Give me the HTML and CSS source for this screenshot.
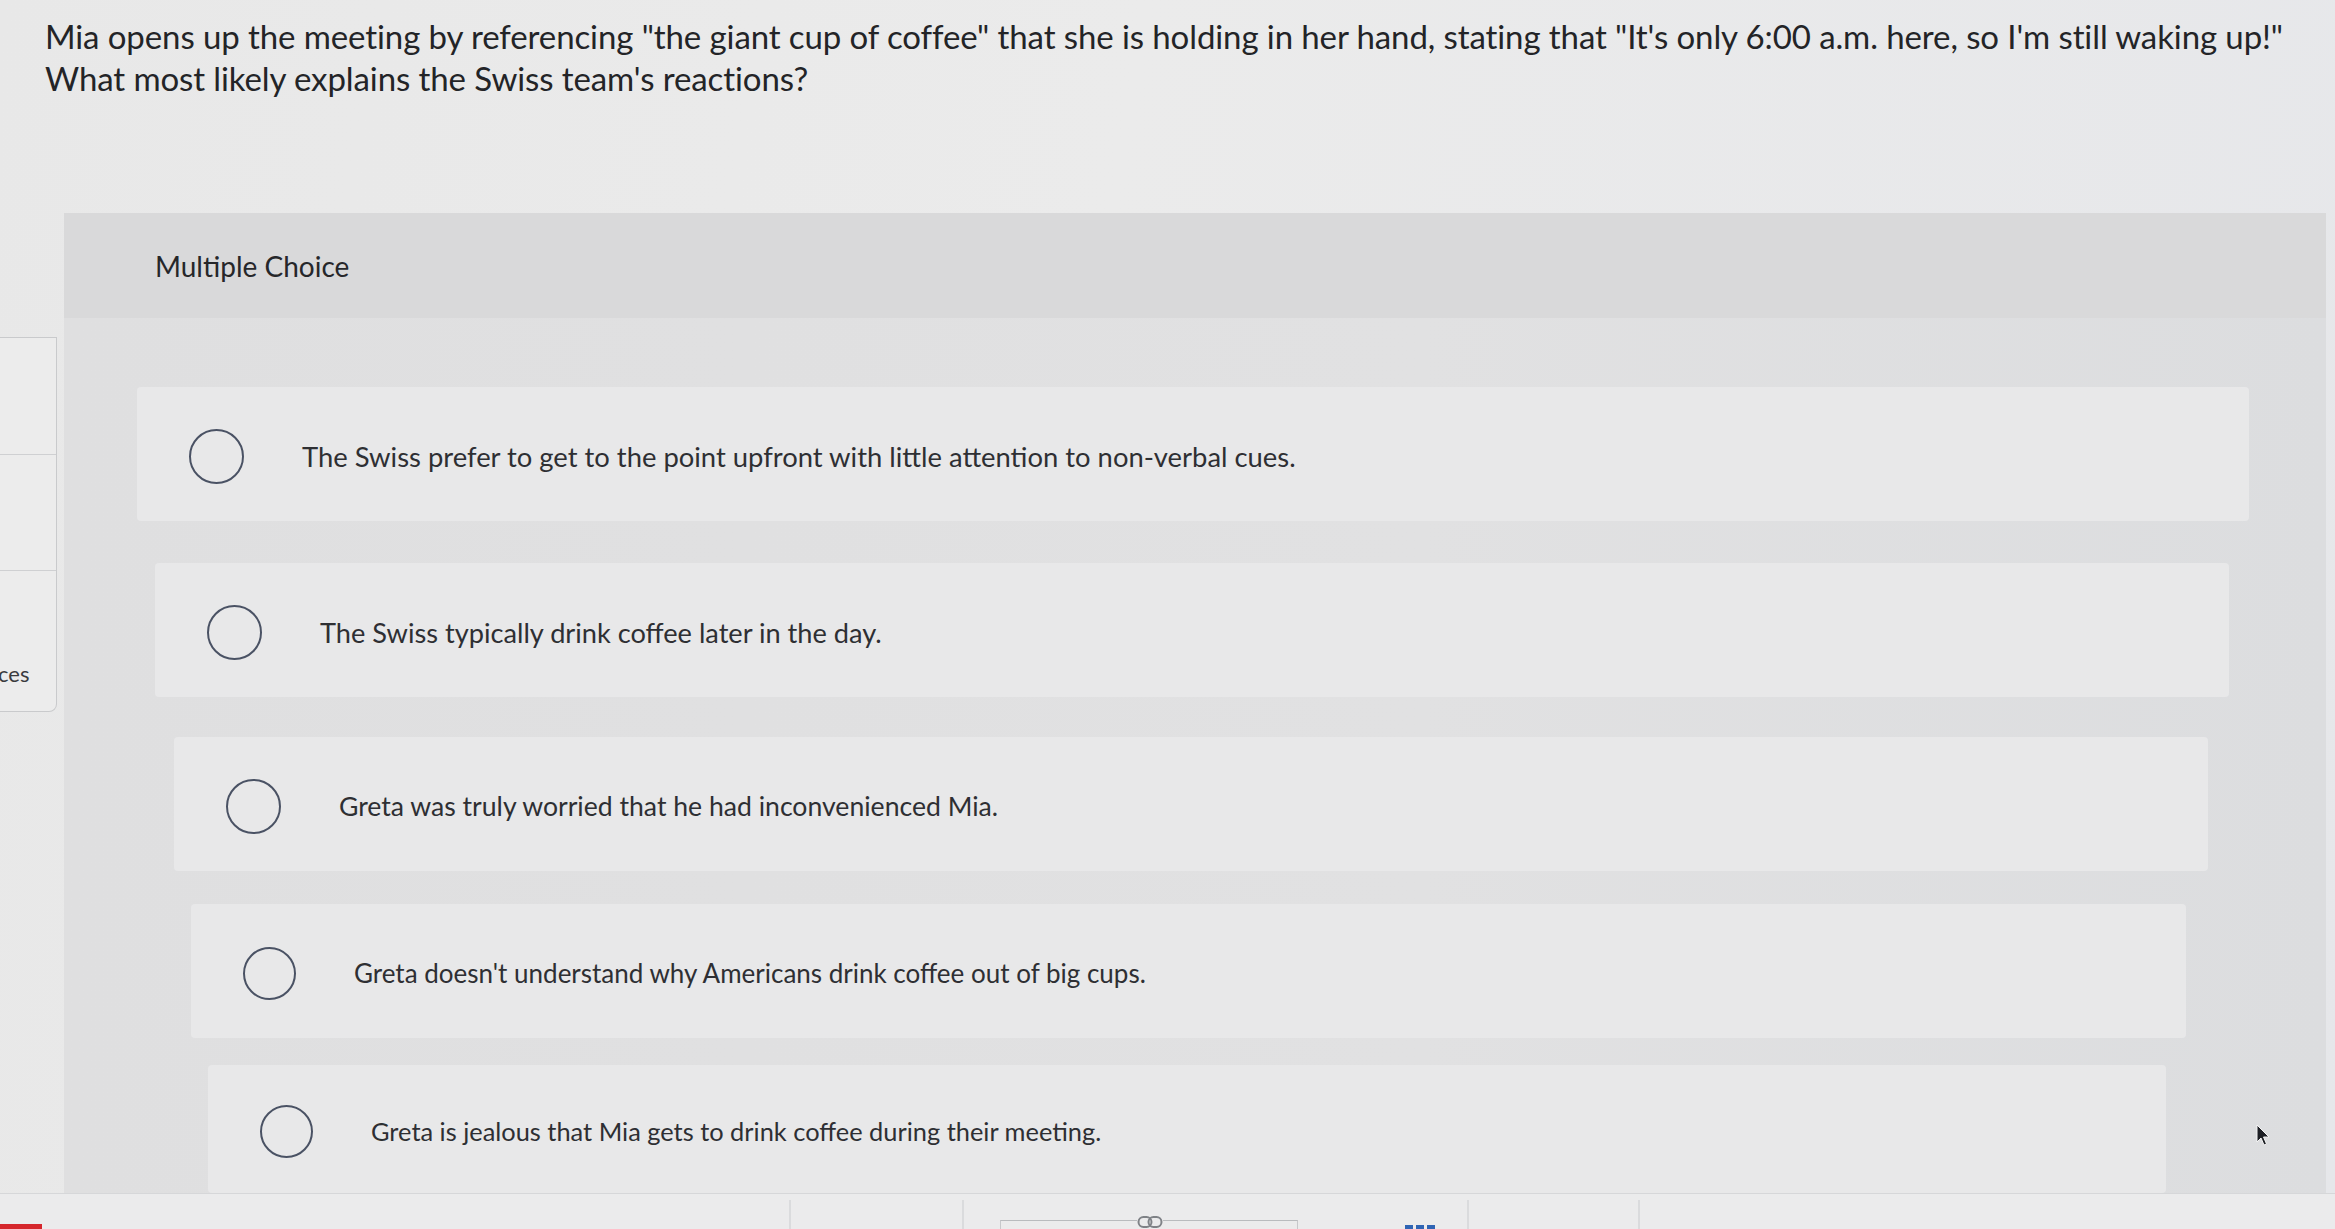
FILE: index.html
```html
<!DOCTYPE html>
<html lang="en">
<head>
<meta charset="utf-8">
<title>Multiple Choice</title>
<link rel="stylesheet" href="styles.css">
</head>
<body>
<div class="screen">
  <p class="question">Mia opens up the meeting by referencing "the giant cup of coffee" that she is holding in her hand, stating that "It's only 6:00 a.m. here, so I'm still waking up!"<br>What most likely explains the Swiss team's reactions?</p>
  <div class="main">
    <aside class="side">
      <div class="side-box">
        <div class="side-row"></div>
        <div class="side-row"></div>
        <div class="side-row side-last"><span class="side-label">ces</span></div>
      </div>
    </aside>
    <section class="panel">
      <div class="panel-head">Multiple Choice</div>
      <div class="options">
        <label class="option"><span class="radio"></span><span class="opt-text">The Swiss prefer to get to the point upfront with little attention to non-verbal cues.</span></label>
        <label class="option"><span class="radio"></span><span class="opt-text">The Swiss typically drink coffee later in the day.</span></label>
        <label class="option"><span class="radio"></span><span class="opt-text">Greta was truly worried that he had inconvenienced Mia.</span></label>
        <label class="option"><span class="radio"></span><span class="opt-text">Greta doesn't understand why Americans drink coffee out of big cups.</span></label>
        <label class="option"><span class="radio"></span><span class="opt-text">Greta is jealous that Mia gets to drink coffee during their meeting.</span></label>
      </div>
    </section>
  </div>
  <footer class="toolbar">
    <span class="red-mark"></span>
    <span class="tb-div tb-div1"></span>
    <span class="tb-div tb-div2"></span>
    <span class="link-field">
      <svg class="link-icon" width="14" height="26" viewBox="0 0 14 26"><rect x="2" y="1.5" width="10" height="13" rx="5" fill="none" stroke="#7f8287" stroke-width="2"/><rect x="2" y="11.5" width="10" height="13" rx="5" fill="none" stroke="#7f8287" stroke-width="2"/></svg>
    </span>
    <span class="blue-mark"><i></i><i></i><i></i></span>
    <span class="tb-div tb-div3"></span>
    <span class="tb-div tb-div4"></span>
  </footer>
  <svg class="cursor" width="16" height="24" viewBox="0 0 16 24"><path d="M2 2 L2 19 L6 15 L9 22 L11.5 21 L8.5 14 L14 14 Z" fill="#1d1f24" stroke="#f4f4f4" stroke-width="1"/></svg>
</div>
</body>
</html>
```
FILE: styles.css
```css
* { box-sizing: border-box; }
html, body { margin: 0; padding: 0; }
body {
  width: 2335px;
  height: 1229px;
  overflow: hidden;
  font-family: "Lato", "Open Sans", "Liberation Sans", sans-serif;
  color: #2b2c2f;
}
.screen {
  position: relative;
  width: 2335px;
  height: 1229px;
  display: flex;
  flex-direction: column;
  background: linear-gradient(100deg, #e8e8e8 0%, #ebebeb 45%, #e6e7ea 100%);
}
.question {
  margin: 0;
  padding: 15px 0 0 45px;
  font-size: 33px;
  line-height: 42px;
  color: #232427;
  letter-spacing: -0.1px;
}
.main {
  display: flex;
  margin-top: 114px;
  margin-right: 9px;
  height: 980px;
}
.side {
  width: 64px;
  flex: none;
  padding-top: 124px;
}
.side-box {
  width: 57px;
  height: 375px;
  border: 1.5px solid #c9cacc;
  border-left: none;
  border-radius: 0 0 8px 0;
  background: #ececec;
  display: flex;
  flex-direction: column;
}
.side-row {
  flex: 1;
  border-bottom: 1.5px solid #cfd0d2;
}
.side-last {
  border-bottom: none;
  display: flex;
  align-items: flex-end;
  padding-bottom: 24px;
}
.side-label {
  font-size: 22px;
  color: #3a3b3e;
  margin-left: -2px;
}
.panel {
  flex: 1;
  height: 980px;
  background: linear-gradient(90deg, #dfdfe0 0%, #e1e1e2 60%, #dcdddf 100%);
  display: flex;
  flex-direction: column;
}
.panel-head {
  height: 105px;
  flex: none;
  display: flex;
  align-items: center;
  padding-left: 91px;
  font-size: 28px;
  color: #26272a;
  background: #d9d9da;
}
.options {
  display: flex;
  flex-direction: column;
  padding-top: 69px;
}
.option {
  display: flex;
  align-items: center;
  height: 134px;
  padding-left: 52px;
  padding-top: 4px;
  background: #e8e8e9;
  border-radius: 4px;
  font-size: 26px;
  color: #2e2f33;
}
.option:nth-child(1) { margin: 0 77px 42px 73px; font-size: 27.4px; }
.option:nth-child(2) { margin: 0 97px 40px 91px; font-size: 27.2px; }
.option:nth-child(3) { margin: 0 118px 33px 110px; font-size: 26.6px; }
.option:nth-child(4) { margin: 0 140px 27px 127px; font-size: 26px; }
.option:nth-child(5) { margin: 0 160px 0 144px; height: 128px; font-size: 25.4px; }
.radio {
  flex: none;
  width: 55px;
  height: 55px;
  border-radius: 50%;
  border: 2.5px solid #4a5264;
  margin-right: 58px;
}
.option:nth-child(4) .radio,
.option:nth-child(5) .radio { width: 53px; height: 53px; }
.opt-text {
  white-space: nowrap;
}
.toolbar {
  position: relative;
  flex: 1;
  border-top: 1.5px solid #d6d7d9;
  background: #ebebec;
}
.red-mark {
  position: absolute;
  left: 0;
  bottom: 0;
  width: 42px;
  height: 5px;
  background: #d5262c;
}
.tb-div {
  position: absolute;
  top: 6px;
  bottom: 0;
  width: 1.5px;
  background: #dadbdd;
}
.tb-div1 { left: 789px; }
.tb-div2 { left: 962px; }
.tb-div3 { left: 1467px; }
.tb-div4 { left: 1638px; }
.link-field {
  position: absolute;
  left: 1000px;
  top: 26px;
  width: 298px;
  height: 20px;
  border-top: 1.5px solid #b9bbbe;
  border-left: 1.5px solid #c7c8cb;
  border-right: 1.5px solid #c7c8cb;
}
.link-icon {
  position: absolute;
  left: 142px;
  top: -12px;
  transform: rotate(90deg);
  background: #ebebec;
}
.blue-mark {
  position: absolute;
  left: 1405px;
  top: 31px;
  display: flex;
  gap: 3px;
}
.blue-mark i {
  display: block;
  width: 8px;
  height: 6px;
  background: #2f64b4;
}
.cursor {
  position: absolute;
  left: 2255px;
  top: 1123px;
}
```
